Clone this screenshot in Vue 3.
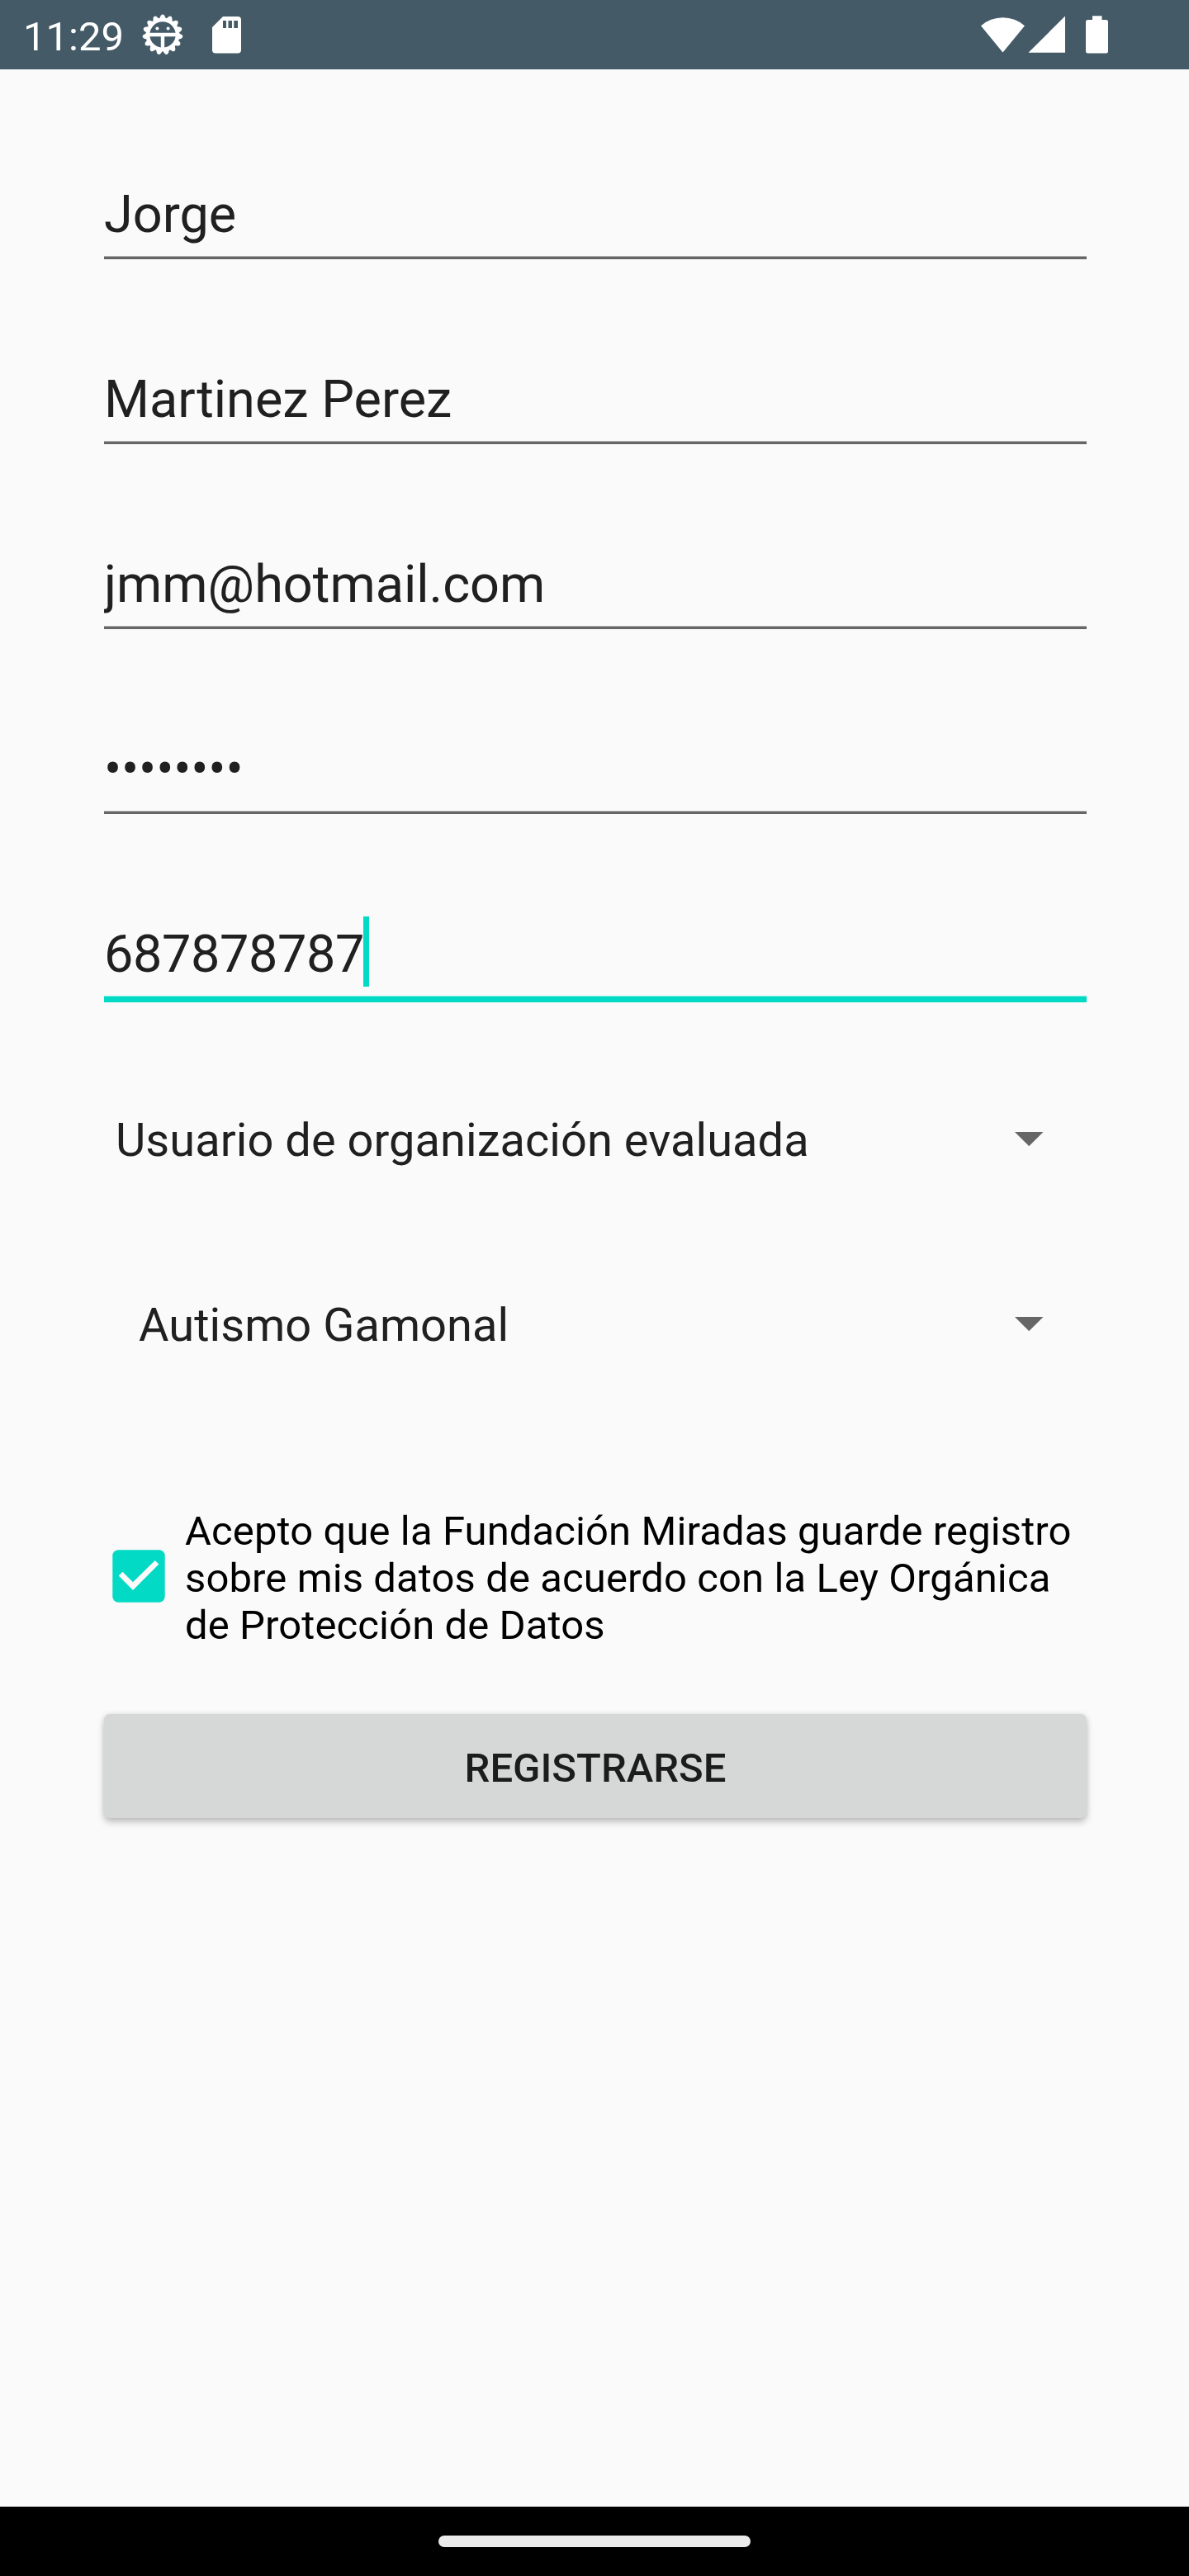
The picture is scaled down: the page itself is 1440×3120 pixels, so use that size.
<script setup>
const fields = [
  { id: 'nombre', value: 'Jorge' },
  { id: 'apellidos', value: 'Martinez Perez' },
  { id: 'correo', value: 'jmm@hotmail.com' },
  { id: 'clave', value: '••••••••', secret: true },
  { id: 'telefono', value: '687878787', focused: true },
]

const spinners = [
  { id: 'rol', value: 'Usuario de organización evaluada', inset: false },
  { id: 'organizacion', value: 'Autismo Gamonal', inset: true },
]

const teeth = Array.from({ length: 15 }, (_, i) => 12 + i * 24)
</script>

<template>
  <div class="screen">
    <header class="status">
      <span class="clock">11:29</span>
      <svg class="gear" width="50" height="50" viewBox="-25 -25 50 50">
        <path
          v-for="a in teeth"
          :key="a"
          :transform="`rotate(${a})`"
          d="M-4.6 18 L-2.2 23.2 Q0 25.6 2.2 23.2 L4.6 18Z"
          fill="#fff"
        />
        <circle r="18" fill="none" stroke="#fff" stroke-width="4.6" />
        <path d="M-17 0H17M0 0V17" stroke="#fff" stroke-width="4.4" />
        <circle cx="-6.6" cy="-7.6" r="2" fill="#fff" />
        <circle cx="6.6" cy="-7.6" r="2" fill="#fff" />
      </svg>
      <svg class="sd" width="35" height="45" viewBox="0 0 35 45">
        <path
          fill="#fff"
          fill-rule="evenodd"
          d="M13 0H31a4 4 0 0 1 4 4V40.500a4 4 0 0 1-4 4H4a4 4 0 0 1-4-4V13ZM13 5V14H17V5ZM19.500 5V14H24V5ZM26.300 5V14H31V5Z"
        />
      </svg>
      <span class="spacer"></span>
      <svg width="54" height="46" viewBox="0 0 54 46">
        <path d="M0 12.300A40 40 0 0 1 53 12.300L26.500 44.500Z" fill="#fff" />
      </svg>
      <svg class="signal" width="46" height="46" viewBox="0 0 46 46">
        <path d="M0.500 44.700L45 0.500V44.700Z" fill="#fff" />
      </svg>
      <svg class="battery" width="27" height="46" viewBox="0 0 27 46">
        <path
          d="M8 0.300H19.500V5H24.500a2.500 2.500 0 0 1 2.500 2.500V43a2.500 2.500 0 0 1-2.500 2.500H2.500A2.500 2.500 0 0 1 0 43V7.500A2.500 2.500 0 0 1 2.500 5H8Z"
          fill="#fff"
        />
      </svg>
    </header>

    <main class="form">
      <div
        v-for="f in fields"
        :key="f.id"
        class="field"
        :class="{ focused: f.focused, secret: f.secret }"
      >
        <div class="value">
          <span>{{ f.value }}</span>
          <i v-if="f.focused" class="caret"></i>
        </div>
        <div class="underline"></div>
      </div>

      <div v-for="s in spinners" :key="s.id" class="spinner" :class="{ inset: s.inset }">
        <span>{{ s.value }}</span>
        <svg class="arrow" width="35" height="17" viewBox="0 0 35 17">
          <path d="M0 0H34.500L17.250 17.200Z" fill="#666" />
        </svg>
      </div>

      <div class="consent">
        <svg class="check" width="64" height="64" viewBox="0 0 64 64">
          <rect x="0.300" y="0.300" width="63.400" height="63.400" rx="7" fill="#03dac5" />
          <path d="M25 49L7.700 31.500L12.500 26.800L25 39.300L51.700 13L56.400 17.500Z" fill="#fafafa" />
        </svg>
        <p>
          Acepto que la Fundación Miradas guarde registro<br />
          sobre mis datos de acuerdo con la Ley Orgánica<br />
          de Protección de Datos
        </p>
      </div>

      <button class="submit" type="button">REGISTRARSE</button>
    </main>

    <footer class="nav"><span class="pill"></span></footer>
  </div>
</template>

<style>
body {
  margin: 0;
}
</style>

<style scoped>
.screen {
  display: flex;
  flex-direction: column;
  width: 1440px;
  height: 3120px;
  background: #fafafa;
  font-family: Roboto, 'Liberation Sans', sans-serif;
  color: #202020;
  overflow: hidden;
}
.status {
  display: flex;
  align-items: flex-start;
  box-sizing: border-box;
  flex: none;
  height: 84px;
  padding: 0 98px 0 28px;
  background: #455a67;
}
.status svg {
  flex: none;
  margin-top: 19px;
}
.clock {
  width: 124px;
  margin-top: 16px;
  font-size: 49px;
  line-height: 57px;
  color: #fff;
  white-space: nowrap;
}
.status .gear {
  margin: 17px 0 0 20px;
}
.status .sd {
  margin: 20px 0 0 35px;
}
.spacer {
  flex: 1;
}
.signal {
  margin-left: 3px;
}
.battery {
  margin-left: 24px;
}
.form {
  display: flex;
  flex-direction: column;
  flex: 1;
  padding: 6px 124px 0 126px;
}
.field {
  display: flex;
  flex-direction: column;
  justify-content: flex-end;
  height: 224px;
}
.field.focused {
  height: 228px;
}
.value {
  display: flex;
  align-items: center;
  height: 74px;
  margin-bottom: 13px;
  font-size: 63px;
  line-height: 74px;
  white-space: nowrap;
  overflow-x: clip;
}
.secret .value {
  letter-spacing: -0.2px;
}
.focused .value {
  letter-spacing: -0.4px;
}
.underline {
  height: 3px;
  border-top: 1px solid #b0b0b0;
  background: #666;
}
.focused .underline {
  height: 7px;
  border-top-color: #80ebe0;
  background: #03dac5;
}
.caret {
  flex: none;
  width: 7px;
  height: 85px;
  margin: 0 0 7px -1px;
  background: #03dac5;
}
.spinner {
  display: flex;
  align-items: center;
  justify-content: space-between;
  height: 66px;
  margin-top: 134px;
  padding: 0 52px 0 14px;
  font-size: 56px;
  line-height: 66px;
  letter-spacing: 0.04px;
}
.spinner + .spinner {
  margin-top: 158px;
}
.spinner.inset {
  padding-left: 42px;
}
.arrow {
  margin-bottom: 3px;
}
.consent {
  display: flex;
  align-items: center;
  margin-top: 188px;
  padding-left: 10px;
}
.check {
  flex: none;
  margin-bottom: 5px;
}
.consent p {
  margin: 0 0 0 24px;
  font-size: 49px;
  line-height: 57px;
  letter-spacing: 0.1px;
  color: #000;
  white-space: nowrap;
}
.submit {
  box-sizing: border-box;
  height: 126px;
  margin: 79px 0 0;
  padding: 5px 0 0;
  border: 0;
  border-radius: 7px;
  background: #d6d8d7;
  box-shadow: 0 5px 9px rgba(0, 0, 0, 0.22), 0 0 6px rgba(0, 0, 0, 0.09);
  font: 500 49px/57px Roboto, 'Liberation Sans', sans-serif;
  color: #1c1c1c;
}
.nav {
  display: flex;
  justify-content: center;
  flex: none;
  height: 84px;
  background: #000;
}
.pill {
  width: 378px;
  height: 14px;
  margin-top: 35px;
  border-radius: 7px;
  background: #ebebeb;
}
</style>
